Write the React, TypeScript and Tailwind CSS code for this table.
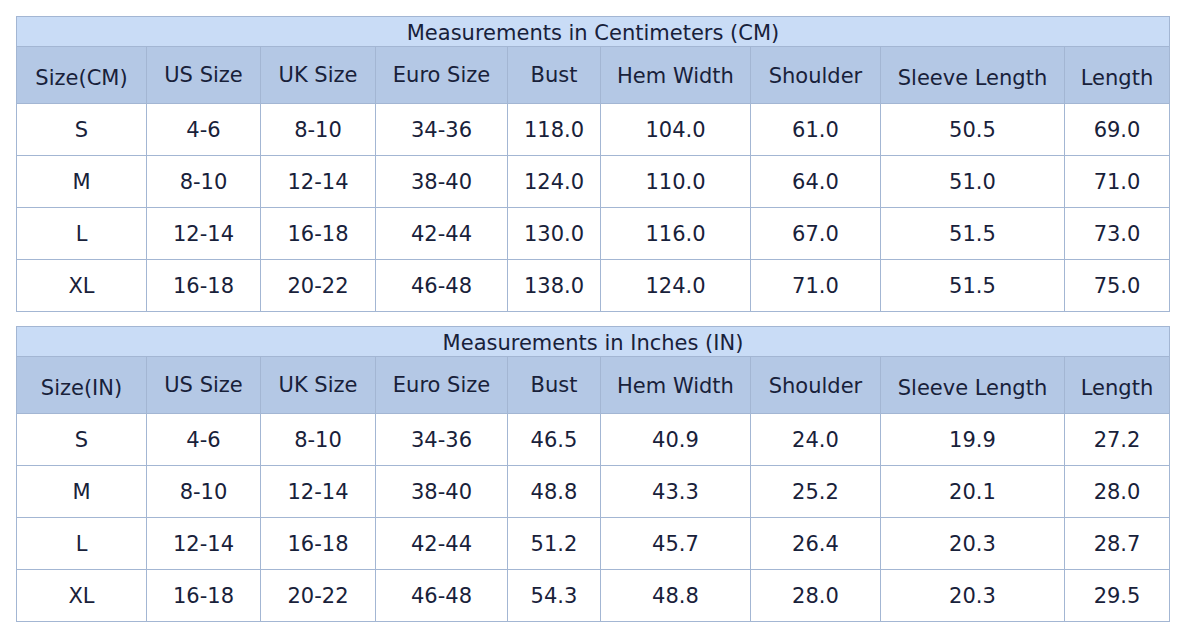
const cols = [
  { w: 'w-[130px]', label: 'Size', pad: 'pt-[7px]' },
  { w: 'w-[114px]', label: 'US Size', pad: 'pt-[1px]' },
  { w: 'w-[115px]', label: 'UK Size', pad: 'pt-[1px]' },
  { w: 'w-[132px]', label: 'Euro Size', pad: 'pt-[1px]' },
  { w: 'w-[93px]', label: 'Bust', pad: 'pt-[1px]' },
  { w: 'w-[150px]', label: 'Hem Width', pad: 'pt-[2px]' },
  { w: 'w-[130px]', label: 'Shoulder', pad: 'pt-[2px]' },
  { w: 'w-[184px]', label: 'Sleeve Length', pad: 'pt-[6px]' },
  { w: 'w-[105px]', label: 'Length', pad: 'pt-[6px]' },
];

const cmRows = [
  ['S', '4-6', '8-10', '34-36', '118.0', '104.0', '61.0', '50.5', '69.0'],
  ['M', '8-10', '12-14', '38-40', '124.0', '110.0', '64.0', '51.0', '71.0'],
  ['L', '12-14', '16-18', '42-44', '130.0', '116.0', '67.0', '51.5', '73.0'],
  ['XL', '16-18', '20-22', '46-48', '138.0', '124.0', '71.0', '51.5', '75.0'],
];

const inRows = [
  ['S', '4-6', '8-10', '34-36', '46.5', '40.9', '24.0', '19.9', '27.2'],
  ['M', '8-10', '12-14', '38-40', '48.8', '43.3', '25.2', '20.1', '28.0'],
  ['L', '12-14', '16-18', '42-44', '51.2', '45.7', '26.4', '20.3', '28.7'],
  ['XL', '16-18', '20-22', '46-48', '54.3', '48.8', '28.0', '20.3', '29.5'],
];

function SizeTable({ title, unit, rows }: { title: string; unit: string; rows: string[][] }) {
  return (
    <table className="border-collapse table-fixed w-[1154px] text-[21px] text-[#18213a]">
      <colgroup>
        {cols.map((c) => (
          <col key={c.label} className={c.w} />
        ))}
      </colgroup>
      <thead>
        <tr className="h-[30px]">
          <th colSpan={9} className="bg-[#c9dcf6] border border-[#a3b6d3] font-normal p-0 leading-none pt-[4px]">
            {title}
          </th>
        </tr>
        <tr className="h-[57px]">
          {cols.map((c, i) => (
            <th key={c.label} className={`bg-[#b4c8e5] border border-[#a3b6d3] font-normal p-0 leading-none ${c.pad}`}>
              {i === 0 ? `Size(${unit})` : c.label}
            </th>
          ))}
        </tr>
      </thead>
      <tbody>
        {rows.map((r) => (
          <tr key={r[0]} className="h-[52px]">
            {r.map((v, i) => (
              <td key={i} className="bg-white border border-[#a3b6d3] text-center p-0 pt-[2px] leading-none">
                {v}
              </td>
            ))}
          </tr>
        ))}
      </tbody>
    </table>
  );
}

export default function App() {
  return (
    <div className="min-h-screen bg-white pt-4 pl-4 flex flex-col gap-[14px]" style={{ fontFamily: '"DejaVu Sans", Verdana, sans-serif' }}>
      <SizeTable title="Measurements in Centimeters (CM)" unit="CM" rows={cmRows} />
      <SizeTable title="Measurements in Inches (IN)" unit="IN" rows={inRows} />
    </div>
  );
}
